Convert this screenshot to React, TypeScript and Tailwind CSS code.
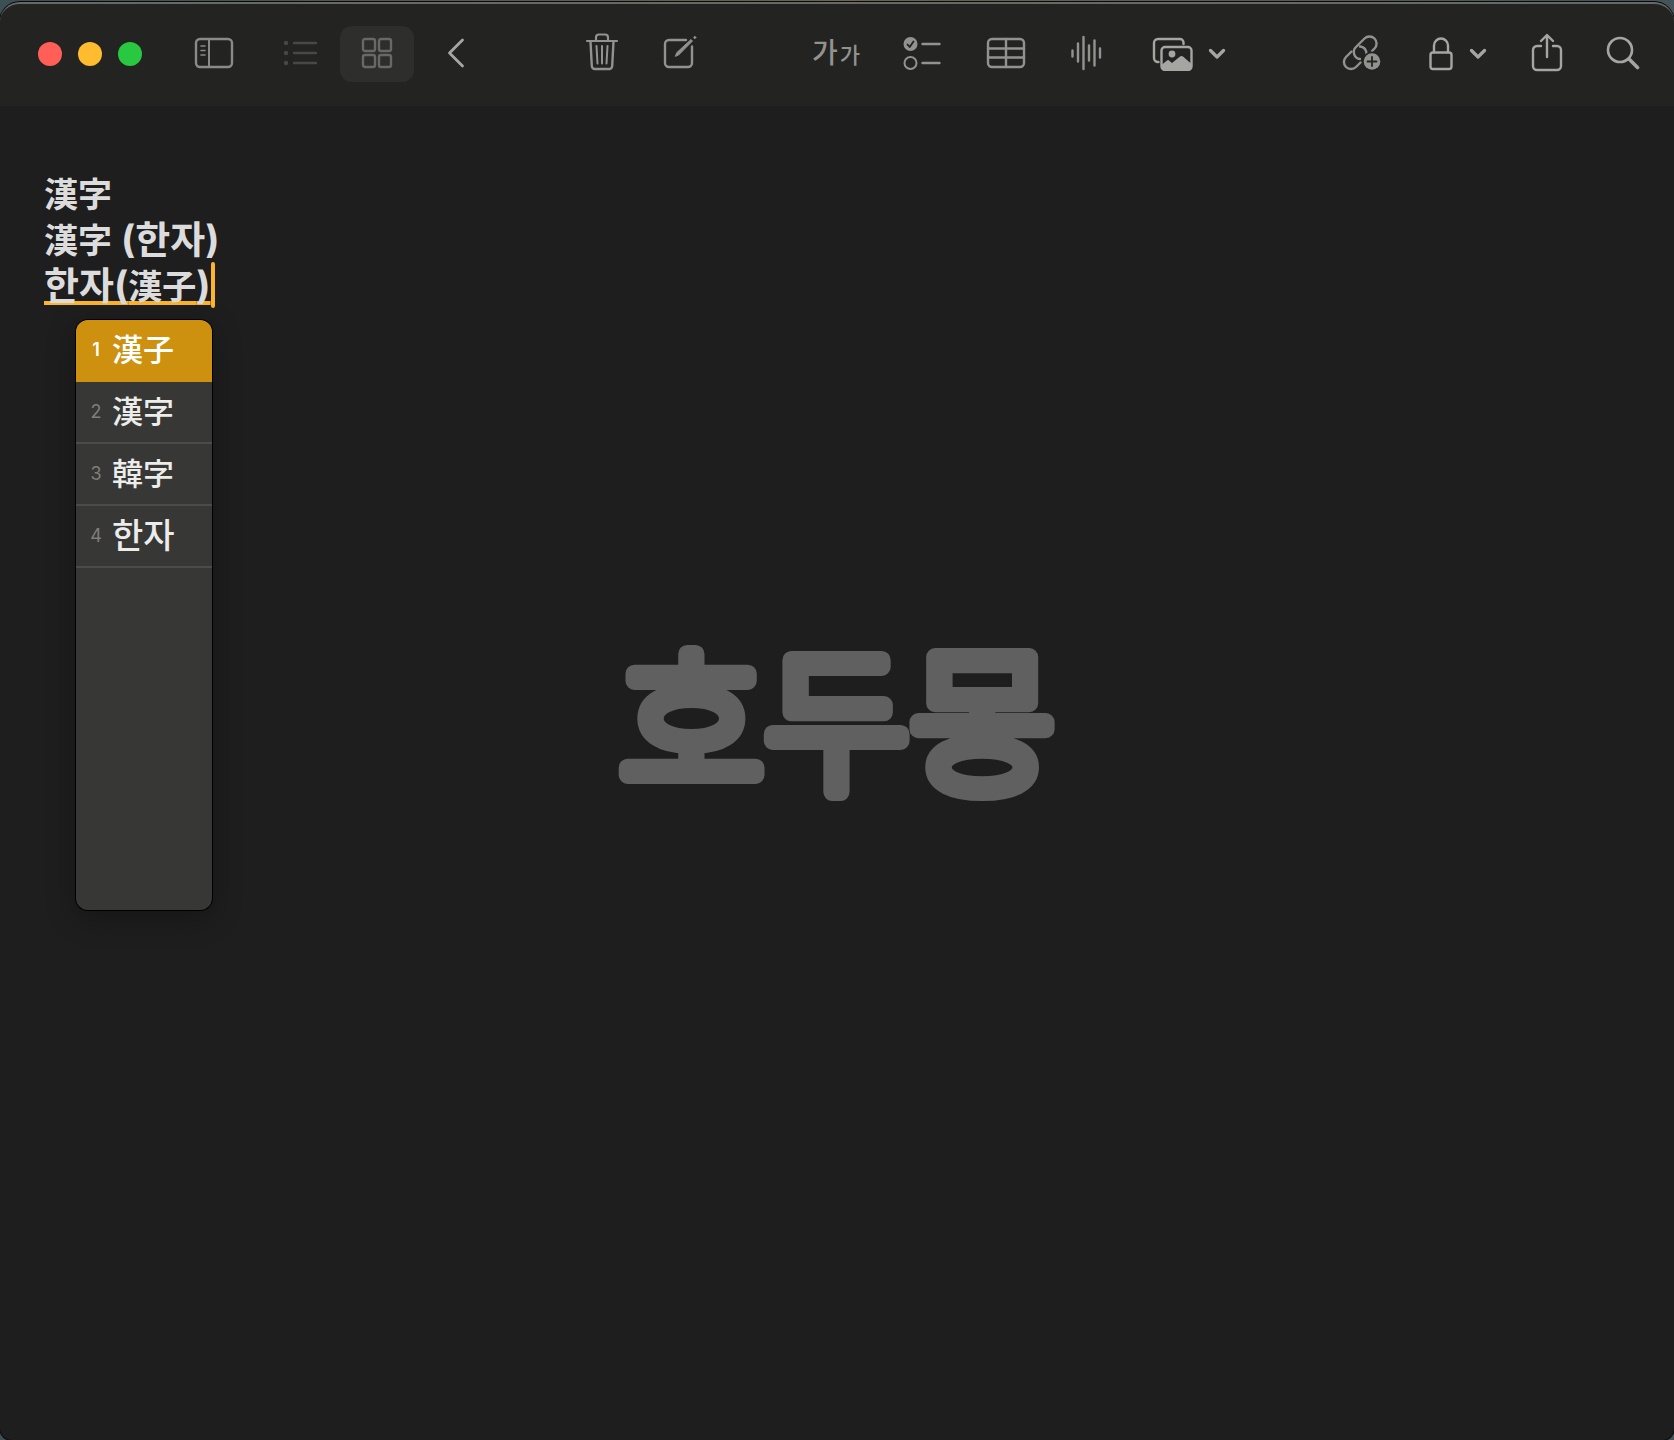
import { useState, type ReactNode } from 'react';
import { clsx } from 'clsx';

const candidates = [
  { word: '漢子', hanja: true },
  { word: '漢字', hanja: true },
  { word: '韓字', hanja: true },
  { word: '한자', hanja: false },
];

type IconProps = { width: number; height: number; children: ReactNode };

function Icon({ width, height, children }: IconProps) {
  return (
    <svg
      width={width}
      height={height}
      viewBox={`0 0 ${width} ${height}`}
      fill="none"
      stroke="currentColor"
      strokeWidth="2.400"
      strokeLinecap="round"
      strokeLinejoin="round"
      className="shrink-0"
      aria-hidden="true"
    >
      {children}
    </svg>
  );
}

function ToolButton({ label, className, children }: { label: string; className?: string; children: ReactNode }) {
  return (
    <button
      type="button"
      aria-label={label}
      className={clsx('flex h-14 shrink-0 items-center justify-center rounded-xl pb-0.5', className)}
    >
      {children}
    </button>
  );
}

function Chevron() {
  return (
    <Icon width={18} height={12}>
      <path d="M2.500 3.500 9 10l6.500-6.500" strokeWidth="3.200" />
    </Icon>
  );
}

function WindowControls() {
  return (
    <div className="flex h-14 items-center gap-4">
      <button type="button" aria-label="닫기" className="size-6 rounded-full bg-[#ff5f57]" />
      <button type="button" aria-label="최소화" className="size-6 rounded-full bg-[#febc2e]" />
      <button type="button" aria-label="확대" className="size-6 rounded-full bg-[#28c840]" />
    </div>
  );
}

function Toolbar() {
  return (
    <header className="flex h-26 items-start rounded-t-[20px] border-t-2 border-[#686866] bg-[#232321] pt-[22px] pr-[27px] pl-[38px] text-[#92928f]">
      <div className="flex items-center">
        <WindowControls />

        <ToolButton label="사이드바" className="ml-11 w-14 text-[#8a8a88]">
          <Icon width={40} height={32}>
            <rect x="2" y="2" width="36" height="28" rx="4" />
            <path d="M15 2v28" strokeWidth="2" />
            <path d="M7 9h4M7 13.500h4M7 18h4" strokeWidth="1.600" />
          </Icon>
        </ToolButton>

        {/* View mode */}
        <ToolButton label="목록 보기" className="ml-6 w-[68px] text-[#484846]">
          <Icon width={36} height={26}>
            <path d="M12 3h22M12 13h22M12 23h22" />
            <g fill="currentColor" stroke="none">
              <circle cx="4" cy="3" r="2.200" />
              <circle cx="4" cy="13" r="2.200" />
              <circle cx="4" cy="23" r="2.200" />
            </g>
          </Icon>
        </ToolButton>
        <ToolButton label="갤러리 보기" className="ml-1.5 w-[74px] bg-[#2e2e2d] text-[#686866]">
          <Icon width={32} height={32}>
            <rect x="2" y="2" width="12" height="12" rx="2" />
            <rect x="18" y="2" width="12" height="12" rx="2" />
            <rect x="2" y="18" width="12" height="12" rx="2" />
            <rect x="18" y="18" width="12" height="12" rx="2" />
          </Icon>
        </ToolButton>

        <ToolButton label="뒤로" className="ml-3.5 w-14 text-[#a5a5a2]">
          <Icon width={20} height={32}>
            <path d="M16.500 3 3.500 16l13 13" strokeWidth="2.800" />
          </Icon>
        </ToolButton>

        <ToolButton label="삭제" className="ml-[94px] w-12">
          <Icon width={34} height={40}>
            <path d="M2 8h30" strokeWidth="2.200" />
            <path d="M11 7.500V4.500a3 3 0 0 1 3-3h6a3 3 0 0 1 3 3v3" strokeWidth="2.200" />
            <path d="M5.500 8.500 6.800 33a3 3 0 0 0 3 3h14.400a3 3 0 0 0 3-3l1.300-24.500" />
            <path d="M11.500 13 12.500 30.500M17 13v17.500M22.500 13l-1 17.500" strokeWidth="2" />
          </Icon>
        </ToolButton>
        <ToolButton label="새로운 메모" className="ml-[30px] w-12">
          <Icon width={36} height={36}>
            <path d="M24 5H7a4 4 0 0 0-4 4v19a4 4 0 0 0 4 4h19a4 4 0 0 0 4-4V11.500" />
            <path d="m13.500 21 1.200-3.300L29 4.500l1.500 1.500L16.800 19.800Z" fill="currentColor" strokeWidth="1" />
            <circle cx="32.800" cy="2.500" r="1" fill="currentColor" strokeWidth="1" />
          </Icon>
        </ToolButton>
      </div>

      {/* Formatting */}
      <div className="mr-[111px] ml-auto flex items-center">
        <ToolButton label="포맷" className="w-[52px]">
          <span className="flex items-baseline gap-0.5 pt-0.5 leading-8 font-medium">
            <span className="text-[28px]">가</span>
            <span className="text-[22px]">가</span>
          </span>
        </ToolButton>
        <ToolButton label="체크리스트" className="ml-9 w-12">
          <Icon width={40} height={36}>
            <circle cx="8.500" cy="9" r="7" fill="currentColor" stroke="none" />
            <path d="m5.500 9.500 2.200 2.500 3.800-5.500" stroke="#232321" strokeWidth="1.800" />
            <circle cx="8.500" cy="28" r="6" strokeWidth="2" />
            <path d="M20.500 9h17M20.500 28h17" />
          </Icon>
        </ToolButton>
        <ToolButton label="표" className="ml-9 w-12">
          <Icon width={40} height={32}>
            <rect x="2" y="2" width="36" height="28" rx="4" />
            <path d="M20 2v28M2 11.500h36M2 20.500h36" />
          </Icon>
        </ToolButton>
        <ToolButton label="오디오 녹음" className="ml-8 w-12">
          <Icon width={34} height={36}>
            <path d="M3.500 15.500v6M9 8.500v18M14.500 2v32M20 10.500v15M25.500 5.500v25M31 13.500v9" />
          </Icon>
        </ToolButton>
        <ToolButton label="미디어" className="ml-[42px] gap-3.5 text-[#a5a5a2]">
          <Icon width={42} height={36}>
            <path d="M6.500 27H6a4 4 0 0 1-4-4V8a4 4 0 0 1 4-4h22a3.500 3.500 0 0 1 3.500 3.500V9" />
            <rect x="9.500" y="12" width="30" height="23" rx="3.500" />
            <circle cx="20" cy="19" r="3.400" fill="currentColor" stroke="none" />
            <path
              d="M10 29.500l5-4q1-.8 2 0l3 2.500 8-6.500q1.500-1 3 0l8 7V32a2.500 2.500 0 0 1-2.500 2.500h-24A2.500 2.500 0 0 1 10 32Z"
              fill="currentColor"
              stroke="none"
            />
          </Icon>
          <Chevron />
        </ToolButton>
      </div>

      <div className="flex items-center">
        <ToolButton label="링크 추가" className="w-12">
          <Icon width={40} height={38}>
            <path d="M31 17l2.500-2.500a7 7 0 0 0-10-10L15 13a7 7 0 0 0 4 12" />
            <path d="M10.500 17.500 5 23a7 7 0 0 0 10 10l4.500-4.500" />
            <path d="M19 12.500a7 7 0 0 1 5 11.300" />
            <circle cx="31" cy="27.500" r="10" fill="#232321" stroke="none" />
            <circle cx="31" cy="27.500" r="8.300" fill="currentColor" stroke="none" />
            <path d="M31 23v9M26.500 27.500h9" stroke="#232321" strokeWidth="1.800" />
          </Icon>
        </ToolButton>
        <ToolButton label="잠금" className="ml-11 gap-4 text-[#a5a5a2]">
          <Icon width={24} height={36}>
            <rect x="1.500" y="17.500" width="21" height="16.500" rx="2.500" />
            <path d="M5 17v-6.500a7 7 0 0 1 14 0V17" />
          </Icon>
          <Chevron />
        </ToolButton>
        <ToolButton label="공유" className="ml-9 w-12 text-[#a5a5a2]">
          <Icon width={32} height={40}>
            <path d="M10 13H6a4 4 0 0 0-4 4v16a4 4 0 0 0 4 4h20a4 4 0 0 0 4-4V17a4 4 0 0 0-4-4h-4" />
            <path d="M16 24V3M10 8l6-6 6 6" />
          </Icon>
        </ToolButton>
        <ToolButton label="검색" className="ml-7 w-12 text-[#a5a5a2]">
          <Icon width={34} height={34}>
            <circle cx="14" cy="14" r="12" strokeWidth="2.600" />
            <path d="m23 23 8.500 8.500" strokeWidth="3.600" />
          </Icon>
        </ToolButton>
      </div>
    </header>
  );
}

function CandidateMenu() {
  const [selected, setSelected] = useState(0);

  return (
    <ul
      role="listbox"
      aria-label="한자 후보"
      className="absolute top-full left-8 z-10 mt-3 h-[590px] w-[136px] overflow-hidden rounded-xl bg-[#373735] font-medium text-[#ececeb] shadow-[0_0_0_1px_#000,0_8px_30px_rgba(0,0,0,0.3)]"
    >
      {candidates.map(({ word, hanja }, i) => (
        <li key={word} role="option" aria-selected={i === selected}>
          <button
            type="button"
            onClick={() => setSelected(i)}
            className={clsx(
              'flex h-[62px] w-full items-center gap-2.5 border-b-2 pl-[14px]',
              i === selected ? 'border-[#cd910f] bg-[#cd910f] text-white' : 'border-[#4b4b4a]',
            )}
          >
            <span
              className={clsx(
                'w-3 text-center text-lg',
                i === selected ? 'font-semibold text-white' : 'font-normal text-[#7f7f7e]',
              )}
            >
              {i + 1}
            </span>
            <span className={clsx('leading-10 whitespace-nowrap', hanja ? 'text-[31px]' : 'text-[34px]')}>{word}</span>
          </button>
        </li>
      ))}
    </ul>
  );
}

function Hanja({ children }: { children: ReactNode }) {
  return <span className="text-[34px] leading-none">{children}</span>;
}

export default function App() {
  return (
    <div
      className="flex min-h-screen flex-col bg-linear-to-r from-[#3b4f55] via-[#6a6450] to-[#43545a] pt-[2px] font-['Inter','Noto_Sans_CJK_KR',sans-serif]"
      lang="ko"
    >
      <div className="relative flex grow flex-col rounded-t-[20px] rounded-b-xl bg-[#1e1e1e] shadow-[0_0_0_1px_#0a0a0a]">
        <Toolbar />

        <main className="grow px-11 pt-16">
          <div className="relative text-[38px] leading-[46px] font-bold text-[#dcdcdc]">
            <div role="textbox" aria-label="메모" aria-multiline="true">
              <p>
                <Hanja>漢字</Hanja>
              </p>
              <p>
                <Hanja>漢字</Hanja> (한자)
              </p>
              <p className="flex">
                <span className="underline decoration-[#fbb42c] decoration-4 underline-offset-2 [text-decoration-skip-ink:none]">
                  한자(<Hanja>漢子</Hanja>)
                </span>
                <span className="w-1 rounded-full bg-[#fbb42c]" />
              </p>
            </div>
            <CandidateMenu />
          </div>
        </main>

        {/* Watermark */}
        <div className="pointer-events-none absolute inset-0 flex items-center justify-center">
          <svg width="480" height="280" viewBox="0 0 480 280">
            <text
              x="240"
              y="200"
              textAnchor="middle"
              fill="#606060"
              stroke="#606060"
              strokeWidth="18"
              strokeLinejoin="round"
              className="font-['Noto_Sans_CJK_KR',sans-serif] text-[158px] font-light"
            >
              호두몽
            </text>
          </svg>
        </div>
      </div>
    </div>
  );
}
